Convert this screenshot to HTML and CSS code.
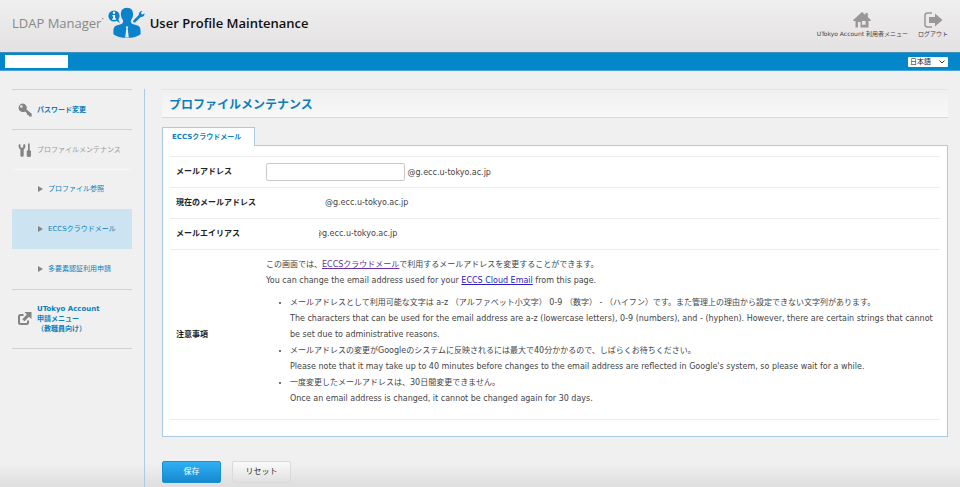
FILE: index.html
```html
<!DOCTYPE html>
<html lang="ja">
<head>
<meta charset="utf-8">
<meta name="viewport" content="width=device-width, initial-scale=1">
<title>User Profile Maintenance</title>
<link rel="stylesheet" href="styles.css">
</head>
<body>
<header class="header">
  <div class="brand">
    <span class="brand-name">LDAP Manager<span class="brand-mark">•</span></span>
    <svg class="brand-icon" viewBox="0 0 38 32" aria-hidden="true">
      <g fill="#0c82cc">
        <circle cx="6" cy="9" r="5.600"/>
        <path d="M7 13l5 3-3-6z"/>
        <path d="M19 .8c4 0 6.300 2.800 6.100 6.500-.1 2.300-.7 4.200-2 5.700-.5 1.600-.2 3.200 1.400 4l5 1.500c2.300.8 3.100 2.700 3.100 6v2.700c-3 2.500-7.500 3.600-13.600 3.600S8.400 29.700 5.400 27.200v-2.700c0-3.300.8-5.200 3.100-6l5-1.500c1.600-.8 1.900-2.400 1.400-4-1.300-1.500-1.900-3.400-2-5.700C12.700 3.600 15 .8 19 .8z"/>
        <path d="M25.300 13.400l5.500-5.300c-.3-2.300 1-4 3.600-4.100l-1.600 2 1.300 1.500 2.500-1c.1 2.400-1.600 3.800-3.900 3.500l-5.300 5.300c-1.400 1-3-.6-2.100-1.900z"/>
      </g>
      <circle cx="6" cy="5.700" r="1.200" fill="#fff"/>
      <path d="M4.500 8h2.600v3.500h1v1.200H4.200v-1.200h1V9.200h-.7z" fill="#fff"/>
      <path d="M17.700 19.500h2.600l-.6 2 1.100 9.100h-3.600l1.100-9.100z" fill="#eceaeb"/>
    </svg>
    <h1 class="brand-title">User Profile Maintenance</h1>
  </div>
  <nav class="tools">
    <a class="tool" href="#">
      <svg class="tool-icon" viewBox="0 0 20 18" aria-hidden="true"><path fill="#999798" fill-rule="evenodd" d="M10 1l3.500 3V2h2.300v4L18.800 9v1H16.500v6.500h-13V10H1.200V9zM10 10v3.800h3.600V10zM6 11v5.500h2.500V11z"/></svg>
      <span>UTokyo Account 利用者メニュー</span>
    </a>
    <a class="tool" href="#">
      <svg class="tool-icon" viewBox="0 0 20 18" aria-hidden="true"><path d="M9 2H4.500Q2 2 2 4.500v9Q2 16 4.500 16H9" fill="none" stroke="#999798" stroke-width="1.500"/><path fill="#999798" d="M6 6h6V2.500L19.500 9 12 15.500V12H6z"/></svg>
      <span>ログアウト</span>
    </a>
  </nav>
</header>
<div class="bar">
  <input class="user" type="text" aria-label="ユーザー">
  <select class="lang" aria-label="言語"><option>日本語</option><option>English</option></select>
</div>
<div class="layout">
  <nav class="side">
    <a class="item strong" href="#">
      <svg class="item-icon" viewBox="0 0 16 16" aria-hidden="true"><path fill="#848484" fill-rule="evenodd" d="M5.500 1.500a4.300 4.300 0 0 1 4 6l5.200 4.300v2.700l-2.200.3-.6-1.600-1.600-.3-.4-1.600L8 9.500a4.300 4.300 0 1 1-2.500-8zM4.300 3.200a1.300 1.300 0 1 0 .1 2.600 1.300 1.300 0 0 0-.1-2.600z"/></svg>
      <span>パスワード変更</span>
    </a>
    <a class="item muted" href="#">
      <svg class="item-icon" viewBox="0 0 16 16" aria-hidden="true"><path fill="#848484" d="M2 2l1.500.8V5l1.300 1L6.200 5V2.800L7.800 2c1.200 2.200.5 4.200-1.100 5.500v6c0 1.700-3.300 1.700-3.300 0v-6C1.700 6.200 1 4.200 2 2zM11 1.500h1.700V8l1.300 1v4.500c0 2-4.300 2-4.300 0V9L11 8z"/></svg>
      <span>プロファイルメンテナンス</span>
    </a>
    <a class="item sub" href="#"><span class="arrow"></span><span>プロファイル参照</span></a>
    <a class="item sub current" href="#"><span class="arrow"></span><span>ECCSクラウドメール</span></a>
    <a class="item sub last" href="#"><span class="arrow"></span><span>多要素認証利用申請</span></a>
    <a class="item strong tall" href="#">
      <svg class="item-icon" viewBox="0 0 16 16" aria-hidden="true"><path d="M6.500 4H3.500Q2 4 2 5.500v6Q2 13 3.500 13h6q1.500 0 1.500-1.500V9.500" fill="none" stroke="#848484" stroke-width="2"/><path fill="#848484" d="M7.500 1h7v7L12 5.800 7.500 10.300 5.300 8.200 9.800 3.600z"/></svg>
      <span>UTokyo Account<br>申請メニュー<br>（教職員向け）</span>
    </a>
  </nav>
  <main class="main">
    <h2 class="title">プロファイルメンテナンス</h2>
    <form class="form">
      <div class="tabs"><a class="tab" href="#panel">ECCSクラウドメール</a></div>
      <div class="panel" id="panel">
        <table class="fields">
          <tr><th scope="row"><label for="mail">メールアドレス</label></th><td><input class="mail" id="mail" type="text"> @g.ecc.u-tokyo.ac.jp</td></tr>
          <tr><th scope="row">現在のメールアドレス</th><td><span class="blank"></span>@g.ecc.u-tokyo.ac.jp</td></tr>
          <tr><th scope="row">メールエイリアス</th><td><div class="alias"><span class="cut">@</span>g.ecc.u-tokyo.ac.jp</div></td></tr>
          <tr class="notes"><th scope="row">注意事項</th><td>
            <p>この画面では、<a class="visited" href="#">ECCSクラウドメール</a>で利用するメールアドレスを変更することができます。<br>You can change the email address used for your <a href="#">ECCS Cloud Email</a> from this page.</p>
            <ul>
              <li>メールアドレスとして利用可能な文字は a-z （アルファベット小文字） 0-9 （数字） - （ハイフン）です。また管理上の理由から設定できない文字列があります。<br>The characters that can be used for the email address are a-z (lowercase letters), 0-9 (numbers), and - (hyphen). However, there are certain strings that cannot be set due to administrative reasons.</li>
              <li>メールアドレスの変更がGoogleのシステムに反映されるには最大で40分かかるので、しばらくお待ちください。<br>Please note that it may take up to 40 minutes before changes to the email address are reflected in Google's system, so please wait for a while.</li>
              <li>一度変更したメールアドレスは、30日間変更できません。<br>Once an email address is changed, it cannot be changed again for 30 days.</li>
            </ul>
          </td></tr>
        </table>
      </div>
      <div class="actions">
        <button class="btn primary" type="submit">保存</button>
        <button class="btn" type="reset">リセット</button>
      </div>
    </form>
  </main>
</div>
</body>
</html>
```
FILE: styles.css
```css
* { box-sizing: border-box; }
body {
  margin: 0;
  min-height: 100vh;
  display: flex;
  flex-direction: column;
  background: #f0f0f0 linear-gradient(transparent, #dedede) no-repeat bottom / 100% 24px;
  color: #444;
  font: 8px/16px "DejaVu Sans", "Noto Sans CJK JP", sans-serif;
}
a { text-decoration: none; color: #0b7fba; }

.header {
  display: flex;
  justify-content: space-between;
  padding: 7px 12px 0;
  height: 52px;
  background: linear-gradient(#f0eff0, #e3e1e2);
}
.brand { display: flex; align-items: center; height: 32px; gap: 4px; }
.brand-name { display: flex; color: #888; font: 13px/20px "Open Sans", sans-serif; }
.brand-mark { font-size: 6px; line-height: 12px; }
.brand-icon { width: 38px; height: 32px; }
.brand-title { margin: 0; color: #111; font: 600 13px/20px "Open Sans", sans-serif; }
.tools { display: flex; gap: 10px; padding-top: 4px; }
.tool { display: flex; flex-direction: column; align-items: center; color: #444; font-size: 6px; line-height: 10px; }
.tool-icon { width: 20px; height: 18px; }

.bar {
  display: flex;
  align-items: center;
  justify-content: space-between;
  height: 19px;
  padding: 0 12px 0 5px;
  background: #0487ca;
  border-top: 1px solid #3c8fbb;
  border-bottom: 1px solid #49a5d8;
}
.user { width: 63px; height: 13px; padding: 0; border: 0; background: #fff; font: inherit; }
.lang {
  width: 40px;
  height: 10px;
  padding: 0 2px;
  border: 0;
  border-radius: 1px;
  appearance: none;
  color: #222;
  font: 7px/10px "DejaVu Sans", "Noto Sans CJK JP", sans-serif;
  background: #fff url("data:image/svg+xml,%3Csvg xmlns='http://www.w3.org/2000/svg' viewBox='0 0 6 4'%3E%3Cpath d='M.5.5 3 3 5.500.5' fill='none' stroke='%23333'/%3E%3C/svg%3E") no-repeat right 3px center / 6px 4px;
}

.layout { flex: 1; display: flex; padding: 18px 12px 0; }
.side { width: 133px; padding-right: 12px; border-right: 1px solid #aacce3; }
.item {
  display: flex;
  align-items: center;
  gap: 4px;
  height: 40px;
  padding-left: 5px;
  border-top: 1px solid #d2d2d2;
  font-size: 7px;
  line-height: 10px;
}
.item-icon { flex: none; width: 16px; height: 16px; }
.strong { font-weight: 700; }
.muted { color: #999; }
.sub { padding: 0 0 2px 26px; gap: 5px; border-top-color: #f7f7f7; }
.current { background: #cce4f1; border-top-color: #cce4f1; }
.last { border-top-color: #f0f0f0; }
.tall { height: 60px; border-bottom: 1px solid #d2d2d2; }
.arrow { border: 3px solid transparent; border-left: 5px solid #858585; border-right: 0; }

.main { flex: 1; min-width: 0; padding-left: 17px; }
.title {
  margin: 0 0 9px;
  height: 29px;
  padding-left: 7px;
  border-top: 1px solid #e5e5e5;
  border-bottom: 1px solid #d9d9d9;
  background: linear-gradient(#f0f0f0, #f8f8f8);
  color: #0b7fba;
  font: 700 12px/27px "Noto Sans CJK JP", sans-serif;
}
.tabs { display: flex; }
.tab {
  position: relative;
  width: 93px;
  height: 19px;
  margin-bottom: -1px;
  border: 1px solid #aacce3;
  border-bottom: 0;
  background: #fff;
  font-size: 7px;
  font-weight: 700;
  line-height: 18px;
  padding-left: 9px;
  white-space: nowrap;
}
.panel { padding: 10px 7px 16px; border: 1px solid #aacce3; background: #fff; }
.fields { width: 100%; border-collapse: collapse; }
.fields tr { height: 31px; border-top: 1px solid #ececec; border-bottom: 1px solid #ececec; }
.fields th { width: 90px; padding: 0 4px 0 6px; color: #222; text-align: left; white-space: nowrap; }
.fields td { padding: 0 6px; }
.mail { width: 139px; height: 18px; border: 1px solid #c8c8c8; border-radius: 2px; font: inherit; vertical-align: middle; }
.blank { display: inline-block; width: 59px; }
.alias { display: flex; padding-left: 53px; }
.cut { display: flex; justify-content: flex-end; width: 3px; overflow: hidden; }
.fields .notes td { padding: 7px 0 12px 6px; }
.notes p { margin: 0 0 6px; }
.notes p a { color: #2a22c4; text-decoration: underline; }
.notes p a.visited { color: #6b2fa0; }
.notes ul { margin: 0; padding-left: 24px; }

.actions { display: flex; gap: 11px; padding-top: 24px; }
.btn {
  width: 59px;
  height: 22px;
  padding: 0;
  border: 1px solid #dadada;
  border-radius: 2px;
  background: linear-gradient(#fafafa, #e0e0e0);
  color: #333;
  font: inherit;
}
.primary { border-color: #1b8fd2; background: linear-gradient(#2fb0f5, #1788d0); color: #fff; }
```
